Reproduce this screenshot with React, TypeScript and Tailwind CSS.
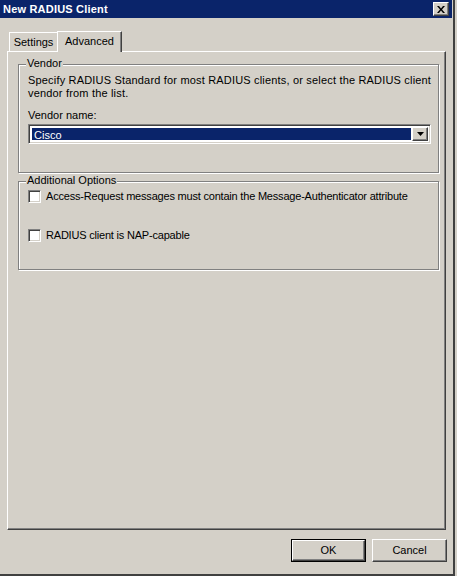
import React from 'react';

// Classic Win2k-style "New RADIUS Client" dialog, Advanced tab.

const raised =
  'border border-t-white border-l-white border-r-[#404040] border-b-[#404040] shadow-[inset_-1px_-1px_0_#808080]';
const sunken =
  'border border-t-[#808080] border-l-[#808080] border-r-white border-b-white shadow-[inset_1px_1px_0_#404040,inset_-1px_-1px_0_#d4d0c8]';

const GroupBox: React.FC<{ label: string; className?: string; children?: React.ReactNode }> = ({ label, className, children }) => (
  <div
    className={`relative border border-[#808080] shadow-[inset_1px_1px_0_#fff,1px_1px_0_#fff] ${className ?? ''}`}
  >
    <span className="absolute -top-[8px] left-[7px] bg-[#d4d0c8] px-[1px] leading-[13px]">{label}</span>
    {children}
  </div>
);

const CheckRow: React.FC<{ text: string }> = ({ text }) => (
  <label className="flex items-center gap-[5px] leading-[13px]">
    <span className={`w-[13px] h-[13px] bg-white ${sunken}`} />
    <span className="tracking-[-0.2px]">{text}</span>
  </label>
);

export default function App() {
  return (
    <div
      className="w-[457px] h-[576px] bg-[#d4d0c8] text-black text-[11px] overflow-hidden"
      style={{ fontFamily: 'Tahoma, "Liberation Sans", Arial, sans-serif' }}
    >
      <div className="w-[455px] h-[576px] border-r-2 border-b-2 border-r-[#404040] border-b-[#404040] flex flex-col">
        {/* title bar */}
        <div className="h-[18px] w-[452px] bg-[#0a246a] flex items-center justify-between pl-[3px] pr-[3px]">
          <span className="text-white font-bold text-[11px] leading-none tracking-[0.2px]">New RADIUS Client</span>
          <button className={`w-[16px] h-[14px] bg-[#d4d0c8] flex items-center justify-center ${raised}`}>
            <svg width="8" height="7" viewBox="0 0 8 7">
              <path d="M0 0h2l2 2.5L6 0h2L5 3.5 8 7H6L4 4.5 2 7H0l3-3.5z" fill="#000" />
            </svg>
          </button>
        </div>

        <div className="pl-[7px] pt-[13px]">
          {/* tabs */}
          <div className="flex items-end h-[20px] pl-[2px]">
            <div className="h-[19px] w-[49px] border-t border-l border-t-white border-l-white border-r border-r-[#404040] flex items-center justify-center pt-[1px]">
              Settings
            </div>
            <div className="h-[21px] w-[65px] -ml-[1px] -mb-[1px] bg-[#d4d0c8] relative z-10 border-t border-l border-t-white border-l-white border-r border-r-[#404040] shadow-[inset_-1px_0_0_#808080] flex items-center justify-center pb-[2px]">
              Advanced
            </div>
          </div>

          {/* panel */}
          <div className="w-[439px] h-[479px] border border-t-white border-l-white border-r-[#404040] border-b-[#404040] shadow-[inset_-1px_-1px_0_#808080] pl-[10px] pt-[12px] flex flex-col gap-[8px]">
            <GroupBox label="Vendor" className="w-[421px] h-[109px] pl-[9px] pt-[9px]">
              <p className="leading-[13px] tracking-[0.18px]">
                Specify RADIUS Standard for most RADIUS clients, or select the RADIUS client
                <br />
                vendor from the list.
              </p>
              <p className="leading-[13px] mt-[9px]">Vendor name:</p>
              <div className={`mt-[2px] w-[403px] h-[20px] bg-white flex items-stretch p-[2px] ${sunken}`}>
                <div className="flex-1 bg-[#0a246a] text-white leading-[14px] pl-[2px] border border-white">Cisco</div>
                <div className={`w-[16px] bg-[#d4d0c8] flex items-center justify-center ${raised}`}>
                  <svg width="7" height="4" viewBox="0 0 7 4">
                    <path d="M0 0h7L3.5 4z" fill="#000" />
                  </svg>
                </div>
              </div>
            </GroupBox>

            <GroupBox label="Additional Options" className="w-[421px] h-[89px] pl-[9px] pt-[8px]">
              <CheckRow text="Access-Request messages must contain the Message-Authenticator attribute" />
              <div className="mt-[26px]">
                <CheckRow text="RADIUS client is NAP-capable" />
              </div>
            </GroupBox>
          </div>

          {/* buttons */}
          <div className="w-[440px] flex justify-end gap-[6px] mt-[9px]">
            <button className="w-[75px] h-[23px] border border-black">
              <span className={`w-full h-full flex items-center justify-center ${raised}`}>OK</span>
            </button>
            <button className={`w-[75px] h-[23px] flex items-center justify-center ${raised}`}>Cancel</button>
          </div>
        </div>
      </div>
    </div>
  );
}
